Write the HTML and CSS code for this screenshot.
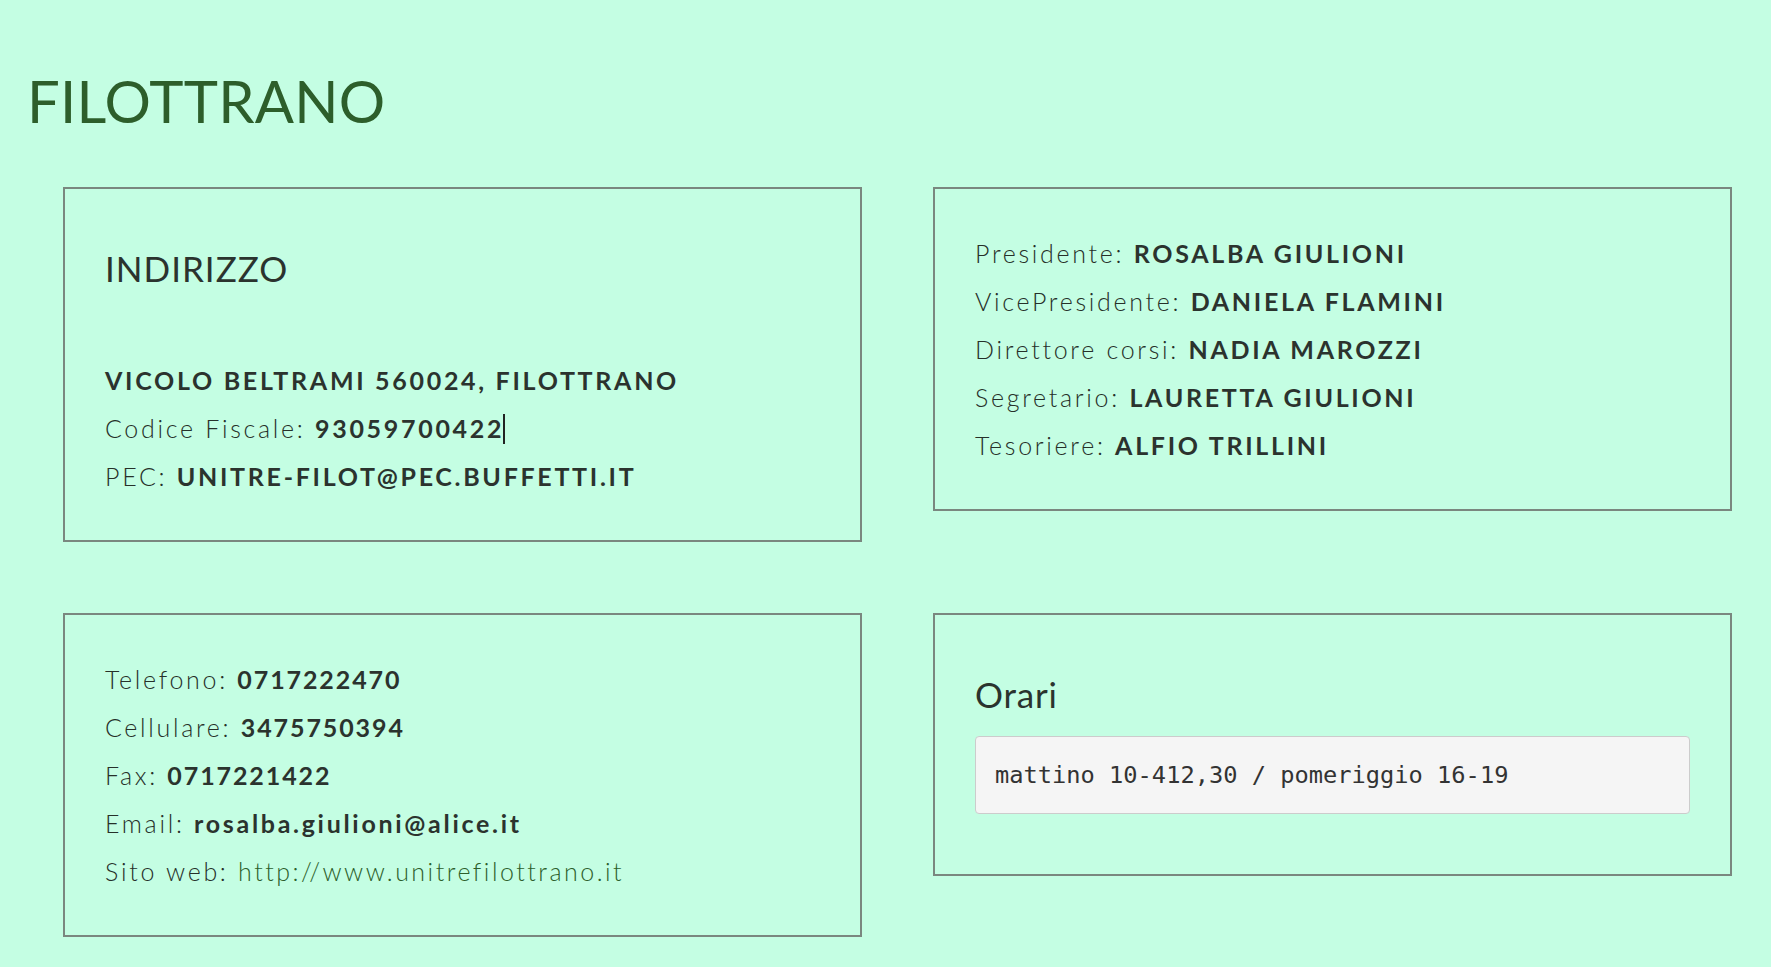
FILE: index.html
```html
<!DOCTYPE html>
<html lang="it">
<head>
<meta charset="utf-8">
<title>FILOTTRANO</title>
<link rel="stylesheet" href="styles.css">
</head>
<body>
<main class="page">
  <h1 class="title">FILOTTRANO</h1>
  <div class="grid">
    <section class="card">
      <h3 class="card-title card-title-gap">INDIRIZZO</h3>
      <div class="row"><strong>VICOLO BELTRAMI 560024, FILOTTRANO</strong></div>
      <div class="row">Codice Fiscale: <strong>93059700422</strong><span class="caret"></span></div>
      <div class="row">PEC: <strong>UNITRE-FILOT@PEC.BUFFETTI.IT</strong></div>
    </section>
    <section class="card">
      <div class="row">Presidente: <strong>ROSALBA GIULIONI</strong></div>
      <div class="row">VicePresidente: <strong>DANIELA FLAMINI</strong></div>
      <div class="row">Direttore corsi: <strong>NADIA MAROZZI</strong></div>
      <div class="row">Segretario: <strong>LAURETTA GIULIONI</strong></div>
      <div class="row">Tesoriere: <strong>ALFIO TRILLINI</strong></div>
    </section>
    <section class="card">
      <div class="row">Telefono: <strong class="num">0717222470</strong></div>
      <div class="row">Cellulare: <strong class="num">3475750394</strong></div>
      <div class="row">Fax: <strong class="num">0717221422</strong></div>
      <div class="row">Email: <strong>rosalba.giulioni@alice.it</strong></div>
      <div class="row">Sito web: <a class="link" href="#">http://www.unitrefilottrano.it</a></div>
    </section>
    <section class="card">
      <h3 class="card-title card-title-orari">Orari</h3>
      <pre class="hours">mattino 10-412,30 / pomeriggio 16-19</pre>
    </section>
  </div>
</main>
</body>
</html>
```
FILE: styles.css
```css
html, body {
  margin: 0;
  padding: 0;
  background: #c4fee3;
}
body {
  font-family: Lato, "Open Sans", sans-serif;
  color: #2b332e;
}
.page {
  padding: 0 40px 30px 27px;
}
.title {
  margin: 0;
  padding-top: 65px;
  font-family: Lato, sans-serif;
  font-weight: 400;
  font-size: 58px;
  line-height: 72px;
  color: #2d5e2b;
  letter-spacing: 0.2px;
}
.grid {
  display: grid;
  grid-template-columns: 799px 799px;
  column-gap: 71px;
  row-gap: 71px;
  align-items: start;
  margin-top: 50px;
  padding-left: 36px;
}
.card {
  border: 2px solid #7a877f;
  padding: 40px;
}
.card-title {
  margin: 20px 0 10px;
  font-family: Lato, sans-serif;
  font-weight: 400;
  font-size: 35px;
  line-height: 38px;
  color: #2b332e;
  letter-spacing: 1px;
}
.card-title-orari {
  letter-spacing: 0.8px;
}
.card-title-gap {
  margin-bottom: 69px;
}
.row {
  font-size: 25px;
  line-height: 48px;
  font-weight: 300;
  letter-spacing: 2.7px;
  white-space: nowrap;
  color: #263029;
}
.row strong {
  font-weight: 700;
  letter-spacing: 2.7px;
  color: #2b332e;
}
.row strong.num {
  letter-spacing: 1.9px;
}
.caret {
  display: inline-block;
  width: 2px;
  height: 30px;
  background: #222;
  vertical-align: -6px;
  margin-left: -1px;
}
.link {
  color: #2d5e2b;
  text-decoration: none;
  letter-spacing: 2.5px;
}
.hours {
  margin: 23px 0 20px;
  padding: 19px;
  background: #f5f5f5;
  border: 1px solid #cccccc;
  border-radius: 4px;
  font-family: "DejaVu Sans Mono", "Liberation Mono", monospace;
  font-size: 23.7px;
  line-height: 38px;
  color: #333;
}
```
